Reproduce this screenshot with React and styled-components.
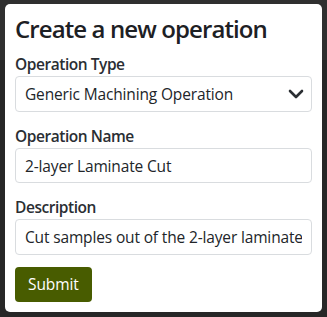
import React from "react";
import styled, { createGlobalStyle } from "styled-components";

const Global = createGlobalStyle`
  html, body { margin: 0; padding: 0; }
  body {
    background: linear-gradient(#2f2f2f 0, #2f2f2f 60px, #272727 60px);
    min-height: 317px;
    font-family: "Open Sans", "Noto Sans", sans-serif;
    color: #212529;
  }
  #root { padding: 4px 5px 5px 5px; }
`;

const Card = styled.form`
  background: #fff;
  border-radius: 5px;
  width: 317px;
  height: 308px;
  box-sizing: border-box;
  padding: 9px 10px 10px 10px;
  display: flex;
  flex-direction: column;
`;

const Title = styled.h1`
  margin: 0;
  font-size: 24px;
  line-height: 32px;
  font-weight: 600;
  letter-spacing: -0.9px;
  color: #1d2024;
`;

const Label = styled.label`
  display: block;
  margin-top: ${(p) => p.$mt}px;
  margin-bottom: 2px;
  font-size: 15.5px;
  line-height: 20px;
  font-weight: 600;
  letter-spacing: -0.45px;
  color: #2a2e33;
`;

const fieldCss = `
  box-sizing: border-box;
  width: 100%;
  height: 36px;
  border: 1px solid #d9dcdf;
  border-radius: 4px;
  background: #fff;
  padding: 0 9px;
  font-family: "Open Sans", "Noto Sans", sans-serif;
  font-size: 15.5px;
  letter-spacing: -0.15px;
  color: #212529;
  outline: none;
`;

const Input = styled.input`
  ${fieldCss}
`;

const SelectWrap = styled.div`
  position: relative;
`;

const Select = styled.select`
  ${fieldCss}
  appearance: none;
  -webkit-appearance: none;
`;

const Chevron = styled.svg`
  position: absolute;
  right: 8px;
  top: 12px;
  width: 16px;
  height: 12px;
  pointer-events: none;
`;

const Button = styled.button`
  align-self: flex-start;
  margin-top: 12px;
  height: 36px;
  padding: 0 13px;
  border: none;
  border-radius: 4px;
  background: #485c00;
  color: #fff;
  font-family: "Open Sans", "Noto Sans", sans-serif;
  font-size: 15.5px;
  letter-spacing: -0.1px;
`;

export default function App() {
  return (
    <>
      <Global />
      <Card onSubmit={(e) => e.preventDefault()}>
        <Title>Create a new operation</Title>
        <Label $mt={9}>Operation Type</Label>
        <SelectWrap>
          <Select defaultValue="generic">
            <option value="generic">Generic Machining Operation</option>
          </Select>
          <Chevron viewBox="0 0 16 12">
            <path d="M2 3l6 6 6-6" fill="none" stroke="#2b2f33" strokeWidth="2.6" strokeLinecap="round" strokeLinejoin="round" />
          </Chevron>
        </SelectWrap>
        <Label $mt={14}>Operation Name</Label>
        <Input defaultValue="2-layer Laminate Cut" />
        <Label $mt={14}>Description</Label>
        <Input defaultValue="Cut samples out of the 2-layer laminate" />
        <Button type="submit">Submit</Button>
      </Card>
    </>
  );
}
